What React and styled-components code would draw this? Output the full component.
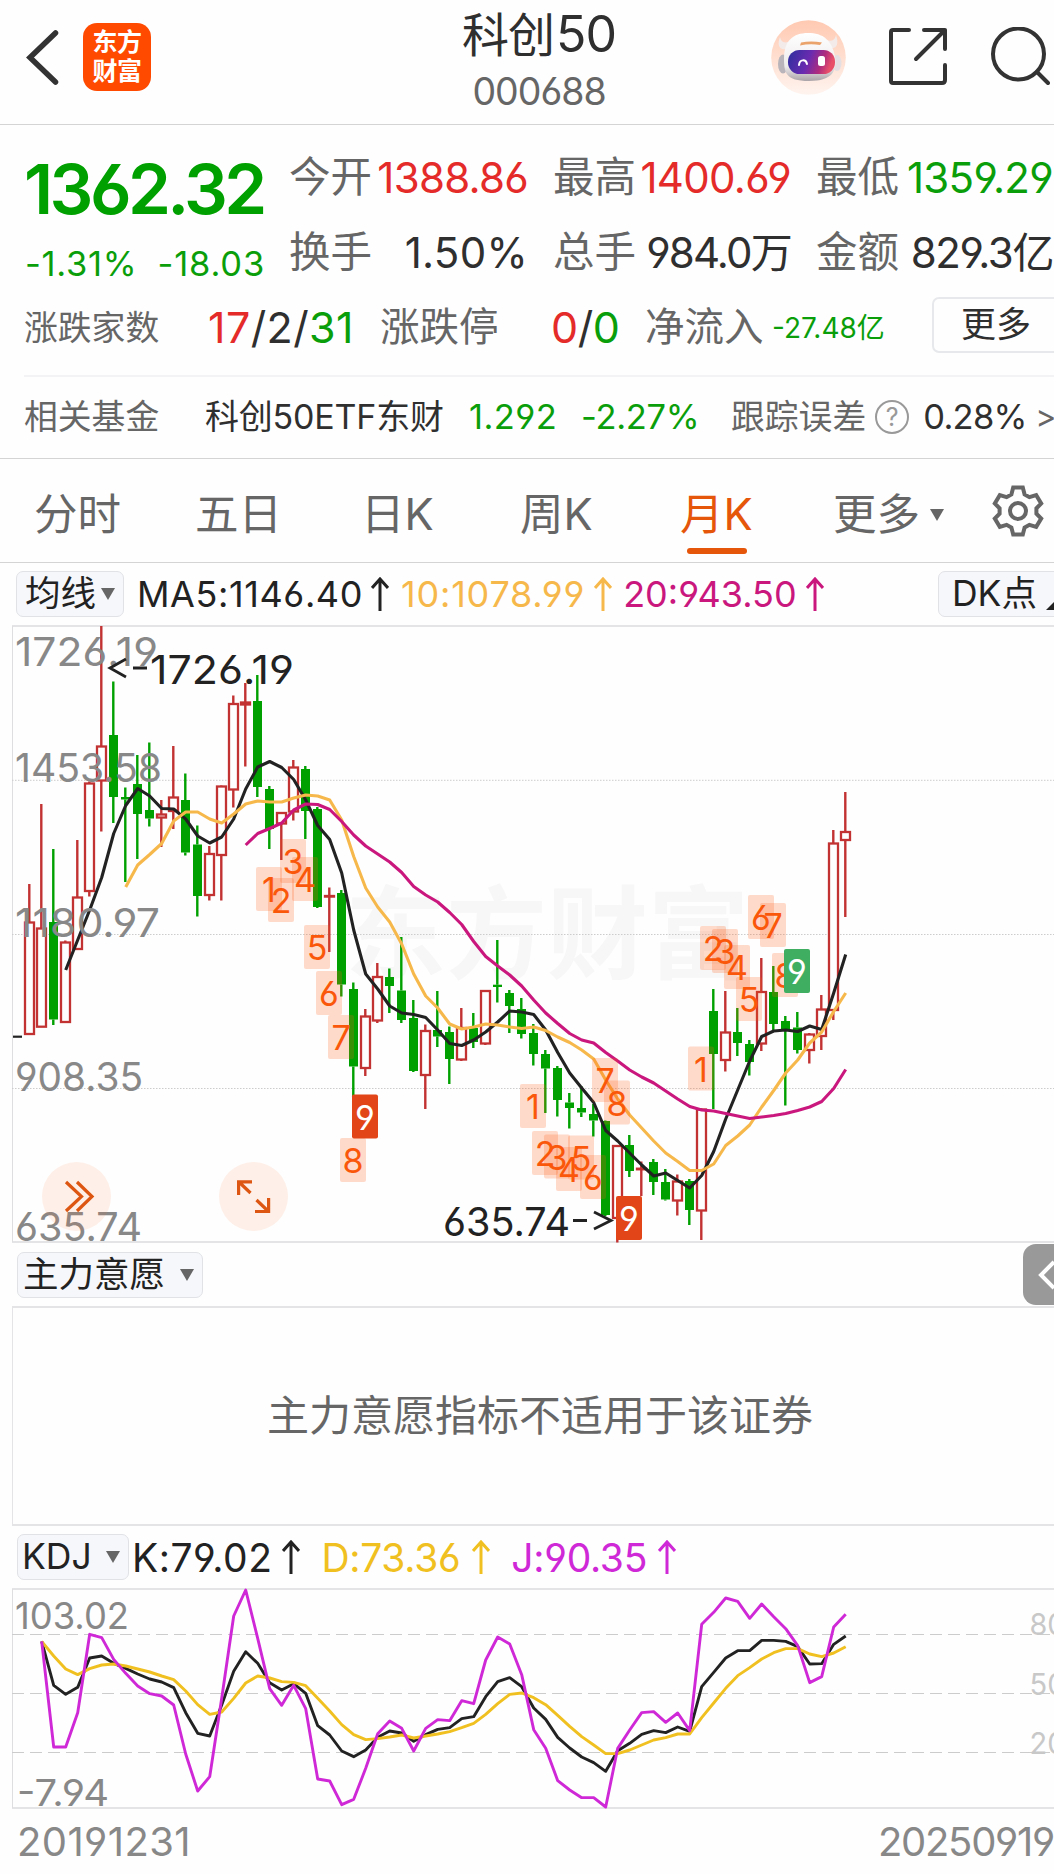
import React from 'react'
import styled, { createGlobalStyle } from 'styled-components'

const RED = '#e52a2a'
const GREEN = '#0a9e0a'
const INK = '#2f2f2f'
const GREY = '#666'
const ORANGE = '#e5560a'
const FONT = `Inter, "Noto Sans CJK SC", sans-serif`

const GlobalStyle = createGlobalStyle`
  * { box-sizing: border-box; }
  body {
    margin: 0;
    background: #fefefe;
    font-family: ${FONT};
    font-feature-settings: 'cv03', 'cv04';
    color: ${INK};
  }
  svg { display: block; flex: none; }
  svg text { font-family: ${FONT}; }
`

const Page = styled.div`
  width: 1054px;
  height: 1874px;
  overflow: hidden;
  background: #fefefe;
`

// s = font size, w = box width, ml = left margin, ls = letter spacing
const Txt = styled.span`
  display: block;
  flex: none;
  white-space: nowrap;
  line-height: 1;
  font-size: ${p => p.$s}px;
  color: ${p => p.$c || 'inherit'};
  width: ${p => (p.$w ? p.$w + 'px' : 'auto')};
  margin-left: ${p => p.$ml || 0}px;
  letter-spacing: ${p => p.$ls || 0}px;
  font-weight: ${p => p.$weight || 400};
`

const Tint = styled.span`
  color: ${p => p.$c};
`

const Header = styled.header`
  display: flex;
  align-items: center;
  height: 125px;
  padding-left: 26px;
  border-bottom: 1px solid #d4d4d4;
`

const BackIcon = styled.svg`
  width: 34px;
  height: 60px;
  margin-bottom: 10px;
`

const Logo = styled.div`
  display: flex;
  flex-direction: column;
  align-items: center;
  justify-content: center;
  width: 68px;
  height: 68px;
  margin: 0 0 10px 23px;
  border-radius: 14px;
  background: #ff4a00;
  color: #fff;
  font-size: 25px;
  font-weight: 700;
  line-height: 29px;
  letter-spacing: -0.5px;
`

const Title = styled.div`
  display: flex;
  flex-direction: column;
  align-items: center;
  width: 240px;
  height: 125px;
  margin-left: 268px;
  padding-top: 9px;
`

const TitleName = styled.div`
  height: 49px;
  font-size: 47px;
  line-height: 49px;
  letter-spacing: -1px;
  margin-bottom: 15px;
`

const TitleNumber = styled.span`
  margin-left: 2px;
  font-size: 50px;
  line-height: 1;
`

const HeadIcons = styled.div`
  display: flex;
  align-items: center;
  gap: 42px;
  margin: 0 0 10px 112px;
`

const Quote = styled.section`
  height: 334px;
  border-bottom: 1px solid #d4d4d4;
`

const QuoteTop = styled.div`
  display: flex;
  height: 164px;
`

const PriceBox = styled.div`
  width: 289px;
  padding: 30px 0 0 24px;
`

const Changes = styled.div`
  display: flex;
  justify-content: space-between;
  width: 241px;
  margin-top: 23px;
  padding-left: 1px;
`

const Stats = styled.div`
  display: grid;
  grid-template-columns: 239px 238px 237px;
  column-gap: 25px;
  grid-template-rows: 75px 75px;
  padding-top: 15px;
`

const Stat = styled.div`
  display: flex;
  align-items: center;
  justify-content: space-between;
`

const Row = styled.div`
  display: flex;
  align-items: center;
  height: ${p => p.$h}px;
  padding-left: ${p => p.$pl || 0}px;
  padding-bottom: ${p => p.$pb || 0}px;
`

const Rule = styled.div`
  height: 2px;
  margin-left: 24px;
  background: #f3f3f5;
`

const MoreButton = styled.div`
  flex: none;
  width: 140px;
  height: 56px;
  margin: 0 0 5px 48px;
  padding-left: 27px;
  border: 2px solid #e6e8eb;
  border-radius: 7px;
  font-size: 35px;
  line-height: 51px;
`

const Help = styled.span`
  display: flex;
  flex: none;
  align-items: center;
  justify-content: center;
  width: 34px;
  height: 34px;
  margin-left: 9px;
  border: 2.5px solid #999;
  border-radius: 50%;
  color: #999;
  font-size: 25px;
  line-height: 1;
`

const Tabs = styled.nav`
  display: flex;
  align-items: center;
  height: 104px;
  border-bottom: 1px solid #d4d4d4;
`

const Tab = styled.div`
  display: flex;
  align-items: center;
  flex: none;
  position: relative;
  height: 100%;
  width: ${p => p.$w}px;
  padding: 8px 0 0 ${p => p.$pl || 0}px;
  font-size: 43.5px;
  line-height: 1;
  white-space: nowrap;
  color: ${p => (p.$active ? ORANGE : GREY)};

  &::after {
    content: '';
    display: ${p => (p.$active ? 'block' : 'none')};
    position: absolute;
    left: 7px;
    bottom: 8px;
    width: 60px;
    height: 6px;
    border-radius: 3px;
    background: ${ORANGE};
  }
`

const Chip = styled.div`
  display: flex;
  align-items: center;
  justify-content: space-between;
  flex: none;
  width: ${p => p.$w}px;
  height: 46px;
  padding: 0 8px 0 ${p => p.$pl || 8}px;
  border: 1.5px solid #e0e2e6;
  border-radius: 7px;
  background: #f6f7fa;
  font-size: 35.5px;
  line-height: 1;
  white-space: nowrap;
  color: #222;
`

// runs past the right edge of the screen
const EdgeChip = styled(Chip)`
  justify-content: flex-start;
  margin-left: auto;
  margin-right: -24px;
`

const Caret = styled.i`
  flex: none;
  border: 7px solid transparent;
  border-top: 12px solid ${GREY};
  border-bottom: 0;
  margin-left: ${p => p.$ml || 0}px;
`

const CornerMark = styled.i`
  flex: none;
  align-self: flex-end;
  margin: 0 0 6px 9px;
  border-left: 14px solid transparent;
  border-bottom: 14px solid #222;
`

const Arrow = styled.svg`
  width: 18px;
  height: 34px;
  margin-left: ${p => p.$ml}px;
`

const Drawer = styled.div`
  display: flex;
  align-items: center;
  align-self: flex-start;
  width: 31px;
  height: 61px;
  margin-left: auto;
  padding-left: 14px;
  border-radius: 13px 0 0 13px;
  background: #999;
  overflow: hidden;
`

const EmptyPanel = styled.div`
  display: flex;
  align-items: center;
  height: 220px;
  margin-left: 12px;
  padding-left: 254px;
  border: 2px solid #e4e4e6;
  border-left-width: 1px;
  border-right: 0;
`

const Dates = styled.div`
  display: flex;
  align-items: center;
  justify-content: space-between;
  height: 64px;
  padding-left: 17px;
`

/* ---------- chart data ---------- */

// [up, high, bodyTop, bodyBottom, low]
const candles = [
  [1, 884, 922.5, 1034, 1034], [1, 804, 928.5, 1026.7, 1027], [0, 849, 922, 1019.5, 1025],
  [1, 940.5, 942.5, 1022, 1022], [1, 840, 897.5, 949, 949], [1, 781.5, 783.5, 891, 896.5],
  [1, 626, 746.5, 780.5, 831.5], [0, 681.5, 735, 797, 823], [0, 787.5, 797, 799.5, 882],
  [0, 755, 784, 814, 859], [0, 742.5, 810, 818.5, 826.5], [1, 800, 814.5, 817.5, 847],
  [1, 746, 797.5, 811, 829], [0, 773.5, 800, 852.5, 855.5], [0, 825.5, 844.5, 896, 916.5],
  [1, 846, 854, 895, 900.5], [1, 785.5, 786.5, 855, 900.5], [1, 695.5, 704, 789.5, 807.5],
  [1, 683, 702.5, 704.5, 766.5], [0, 675, 701, 787, 797], [0, 786, 789, 829, 849],
  [1, 812, 813, 823.5, 860], [1, 760, 767.5, 811.5, 820.5], [0, 766, 769, 811, 839],
  [0, 807, 809, 907, 908], [1, 887.5, 896, 896.6, 952], [0, 890, 893, 984.5, 996.5],
  [0, 982.5, 989, 1066.5, 1120], [1, 1009, 1016.5, 1068, 1076], [1, 963, 977, 1020.5, 1023],
  [0, 968.5, 977, 986, 1013], [0, 937, 990.5, 1020, 1023], [0, 1000, 1018, 1071, 1072],
  [1, 1024.5, 1031, 1075, 1109], [0, 991, 1030, 1036.5, 1047], [0, 1026.5, 1032, 1059, 1084],
  [1, 1008, 1028, 1059.5, 1061], [0, 1013, 1028, 1042, 1048], [1, 990, 991, 1043.5, 1045],
  [0, 940, 984.7, 987, 1002.5], [0, 990, 993, 1006, 1033], [0, 998, 1009, 1034, 1038.5],
  [0, 1024, 1033, 1054, 1065.5], [0, 1050, 1054, 1068.5, 1113], [0, 1066, 1068, 1100, 1116.5],
  [0, 1093, 1102.5, 1108, 1128.5], [0, 1086, 1108, 1112.5, 1117], [0, 1104, 1114, 1120.5, 1136.5],
  [0, 1120.5, 1121, 1215, 1216], [1, 1145, 1146, 1218, 1242.5], [0, 1135, 1145, 1171, 1177],
  [1, 1161.5, 1168.7, 1169.3, 1196], [0, 1159, 1162, 1182, 1195], [0, 1169, 1182, 1199.5, 1200.5],
  [1, 1174.5, 1181.5, 1200.5, 1215.5], [0, 1179, 1181, 1210, 1225], [1, 1108.5, 1109.5, 1210.5, 1240],
  [0, 989, 1011, 1054, 1109], [1, 991, 1032.5, 1060, 1071.5], [0, 1008, 1032, 1043, 1056],
  [0, 1040, 1044, 1062, 1075.5], [1, 958, 992, 1043.5, 1051], [0, 966, 992, 1024, 1030],
  [0, 1016, 1021, 1029, 1105.5], [0, 1012, 1027.5, 1050, 1053.5], [1, 1033, 1034.5, 1050, 1063.5],
  [1, 995, 1009.5, 1036, 1050], [1, 830, 843.5, 1010, 1020], [1, 792, 832, 840, 917],
]

const ma5 = [970, 940, 910, 877.5, 833.5, 805.5, 788.5, 796, 808.5, 809, 819, 836, 843, 837, 819, 789, 767, 761.5,
  767.5, 779.5, 800, 825.5, 839.5, 873, 930, 974, 989, 1006, 1013, 1014.5, 1017.5, 1030, 1043.5, 1045.5, 1040,
  1032, 1022, 1011, 1012, 1014.5, 1030, 1052.5, 1073, 1088, 1102.5, 1130.5, 1141, 1153, 1165, 1176, 1173,
  1180.5, 1188, 1175.5, 1151.5, 1119, 1090, 1061, 1036.5, 1031, 1030, 1031.5, 1026, 1029.5, 993, 954.5]

const ma10 = [887, 865, 854.5, 843.5, 821, 812, 812, 819, 823, 814, 804, 801, 802, 802, 798, 795, 796, 800, 820,
  856.5, 888, 907, 922, 944, 974, 996, 1008, 1024, 1029, 1027, 1024, 1025, 1027, 1028.5, 1027, 1030.5, 1037,
  1042.5, 1050, 1059, 1080, 1099, 1115, 1128, 1141, 1153, 1161.5, 1170.5, 1170.5, 1164, 1145.5, 1136, 1125,
  1107, 1090.5, 1073, 1060, 1043, 1032, 1011.5, 993]

const ma20 = [845, 833.5, 828.5, 823, 810, 804, 804.5, 809.5, 821.5, 835, 846, 854, 862, 872.5, 886.5, 895, 902,
  912.5, 924.5, 941.5, 956.5, 966, 975, 986, 1000, 1013, 1023.5, 1033.5, 1040, 1043, 1052.5, 1061, 1070, 1077,
  1083, 1091, 1099, 1106.5, 1110, 1111, 1113.5, 1116, 1118.5, 1117, 1115.5, 1113.5, 1110.5, 1107, 1101.5,
  1088.5, 1069.5]

// [count, candle index, top, solid fill]
const marks = [
  [1, 20, 867], [2, 21, 878], [3, 22, 839], [4, 23, 857], [5, 24, 925], [6, 25, 971], [7, 26, 1015],
  [8, 27, 1138], [9, 28, 1094.5, '#e24517'],
  [1, 42, 1084], [2, 43, 1131], [3, 44, 1134.5], [4, 45, 1147], [5, 46, 1135.5], [6, 47, 1155],
  [7, 48, 1058], [8, 49, 1080.5], [9, 50, 1196, '#e24517'],
  [1, 56, 1046.5], [2, 57, 926], [3, 58, 929], [4, 59, 945], [5, 60, 977], [6, 61, 895], [7, 62, 903],
  [8, 63, 953], [9, 64, 949, '#3fae60'],
]

const kLine = [334, 466, 493, 472, 384, 378, 400, 415, 432, 447, 456, 473, 548, 610, 618, 525, 424, 365, 400, 458,
  480, 461, 490, 587, 615, 663, 680, 660, 622, 603, 609, 634, 614, 598, 593, 566, 560, 500, 455, 443, 470, 534,
  568, 622, 654, 681, 698, 724, 662, 640, 613, 602, 608, 591, 604, 470, 427, 384, 362, 362, 331, 331, 334, 350,
  402, 401, 343, 318]

const dLine = [334, 378, 417, 434, 416, 405, 402, 408, 417, 426, 438, 449, 483, 524, 553, 546, 505, 459, 438, 444,
  455, 457, 467, 505, 543, 584, 614, 629, 626, 621, 615, 624, 618, 612, 605, 593, 580, 553, 521, 493, 489, 503,
  524, 556, 589, 620, 645, 671, 671, 660, 645, 630, 623, 612, 612, 563, 519, 475, 437, 413, 387, 368, 356, 356,
  372, 380, 369, 350]

const jLine = [334, 651, 651, 548, 313, 323, 388, 430, 468, 491, 498, 525, 672, 783, 740, 505, 258, 180, 325, 476,
  526, 466, 536, 747, 753, 824, 808, 715, 611, 573, 595, 663, 595, 569, 572, 512, 521, 390, 321, 342, 434, 599,
  655, 752, 780, 803, 803, 831, 655, 600, 548, 545, 577, 549, 602, 283, 247, 204, 214, 265, 222, 260, 296, 347,
  458, 440, 291, 253]

const cx = i => 29.5 + i * 12
const points = (list, start, fy = v => v) => list.map((v, n) => `${cx(n + start) + 0.2},${fy(v)}`).join(' ')
const kdjY = v => 1530 + v / 3

/* ---------- pieces ---------- */

const UpArrow = ({ color, ml }) => (
  <Arrow $ml={ml} viewBox="0 0 18 34" fill="none" stroke={color} strokeWidth="3">
    <path d="M9 2V34M1 11L9 2L17 11" />
  </Arrow>
)

const Robot = () => (
  <svg width="75" height="75" viewBox="0 0 75 75">
    <defs>
      <linearGradient id="halo" x1="0" y1="0" x2="0" y2="1">
        <stop offset="0" stopColor="#ffc9b1" />
        <stop offset="1" stopColor="#fff4ef" />
      </linearGradient>
      <linearGradient id="visor" x1="0" y1="0" x2="1" y2="0.2">
        <stop offset="0" stopColor="#2d2f9e" />
        <stop offset="0.5" stopColor="#6a2bb0" />
        <stop offset="0.8" stopColor="#b02c7c" />
        <stop offset="1" stopColor="#e8506a" />
      </linearGradient>
      <linearGradient id="shell" x1="0" y1="0" x2="0" y2="1">
        <stop offset="0" stopColor="#ffffff" />
        <stop offset="0.7" stopColor="#eeebeb" />
        <stop offset="1" stopColor="#aaa3a8" />
      </linearGradient>
    </defs>
    <circle cx="37.5" cy="37.5" r="37.3" fill="url(#halo)" />
    <path d="M9 17C6 25 8 30 15 29L20 21C13 24 10 22 9 17ZM65 15C68 24 66 29 59 28L54 20C61 22 64 20 65 15Z" fill="#f3ebe9" />
    <ellipse cx="12" cy="44" rx="5" ry="9.5" fill="#b9b4ba" />
    <ellipse cx="66" cy="43" rx="4.5" ry="8" fill="#e4dfe2" />
    <path d="M13 38C13 21 22 13 37 13S61 20 64 37C66 50 62 61 38 61S13 52 13 38Z" fill="url(#shell)" />
    <path d="M30 22.5Q40 20.5 51 22.5L49 25Q39 23.5 29 25.5Z" fill="#eba36c" />
    <rect x="17" y="30" width="47" height="24" rx="11.5" fill="url(#visor)" />
    <path d="M28 45C28.5 39 35 39 36 44" fill="none" stroke="#fff" strokeWidth="2" strokeLinecap="round" />
    <rect x="47" y="36" width="7" height="10" rx="2.5" fill="#fff" />
  </svg>
)

const Gear = () => (
  <svg width="52" height="52" viewBox="-26 -26 52 52" fill="none" stroke={GREY} strokeWidth="4" strokeLinejoin="miter">
    <path d="M-4.8 -23.5H4.8L6.6 -16.6L11.4 -13.8L18.2 -15.9L23.2 -7.6L18.4 -2.7V2.7L23.2 7.6L18.2 15.9L11.4 13.8L6.6 16.6L4.8 23.5H-4.8L-6.6 16.6L-11.4 13.8L-18.2 15.9L-23.2 7.6L-18.4 2.7V-2.7L-23.2 -7.6L-18.2 -15.9L-11.4 -13.8L-6.6 -16.6Z" />
    <circle r="8" />
  </svg>
)

const Candle = ({ data, i }) => {
  const [up, high, top, bottom, low] = data
  const x = cx(i)
  const color = up ? '#c23232' : '#00a000'
  return (
    <g>
      <path d={`M${x - 0.2} ${high}V${top}M${x - 0.2} ${bottom}V${low}`} stroke={color} strokeWidth="2.4" />
      {up
        ? <rect x={x - 4.5} y={top} width="9" height={bottom - top} fill="#fefefe" stroke={color} strokeWidth="2.3" />
        : <rect x={x - 4.5} y={top} width="9" height={bottom - top} fill={color} />}
    </g>
  )
}

const AxisText = ({ x, y, len, size = 40, fill = '#888', children }) => (
  <text x={x} y={y} fontSize={size} fill={fill} textLength={len} lengthAdjust="spacingAndGlyphs">{children}</text>
)

const KChart = () => (
  <svg width="1054" height="619" viewBox="0 625 1054 619">
    <text x="345" y="971" fontSize="101" fontWeight="700" fill="#f7f7f8">东方财富</text>
    <path d="M12 626H1054M12 1242H1054" stroke="#e4e4e6" strokeWidth="2" />
    <path d="M12.5 626V1242" stroke="#dedee0" />
    <path d="M12 780.3H1054M12 934.5H1054M12 1088.5H1054" stroke="#ccc" strokeDasharray="1.5 1.5" />
    <path d="M13 1036.7H22" stroke="#222" strokeWidth="2.2" />
    {candles.map((c, i) => <Candle key={i} data={c} i={i} />)}
    <g fill="none" strokeWidth="3.1" strokeLinejoin="round">
      <polyline points={points(ma5, 3)} stroke="#222" />
      <polyline points={points(ma10, 8)} stroke="#f7b84b" />
      <polyline points={points(ma20, 18)} stroke="#c9177e" />
    </g>
    {marks.map(([n, i, top, solid], k) => (
      <g key={k}>
        <rect x={16 + i * 12} y={top} width="26" height="44" rx="2" fill={solid || 'rgba(255,90,20,.22)'} />
        <text x={29 + i * 12} y={top + 35} fontSize="34" textAnchor="middle" fill={solid ? '#fff' : '#fa570a'}>{n}</text>
      </g>
    ))}
    <AxisText x={15} y={666} len={143}>1726.19</AxisText>
    <AxisText x={15} y={781.5} len={147}>1453.58</AxisText>
    <AxisText x={15} y={937} len={145}>1180.97</AxisText>
    <AxisText x={15} y={1091} len={128}>908.35</AxisText>
    <AxisText x={15} y={1241} len={127}>635.74</AxisText>
    <path d="M126 659L110 668L126 677M133 668H147" fill="none" stroke="#222" strokeWidth="2.8" />
    <AxisText x={150} y={684} len={144} fill="#222">1726.19</AxisText>
    <AxisText x={443} y={1236} len={127} fill="#222">635.74</AxisText>
    <path d="M573 1220.5H587M594 1212L611 1220.5L594 1229" fill="none" stroke="#222" strokeWidth="2.8" />
    <circle cx="76.5" cy="1196.5" r="34.5" fill="rgba(255,110,40,.1)" />
    <circle cx="253.5" cy="1196.5" r="34.5" fill="rgba(255,110,40,.1)" />
    <g fill="none" stroke="#dd5712" strokeWidth="3.2">
      <path d="M66 1182L81.5 1196.5L66 1211M77 1182L92 1196.5L77 1211" />
      <path d="M252 1181.8H238.6V1195M239 1182L250.5 1193M255 1211.5H268.6V1198M268 1211L256.5 1200" />
    </g>
  </svg>
)

const KdjChart = () => (
  <svg width="1054" height="222" viewBox="0 1588 1054 222">
    <path d="M12 1589H1054M12 1808H1054" stroke="#e4e4e6" strokeWidth="2" />
    <path d="M12.5 1589V1808" stroke="#dedee0" />
    <path d="M12 1634.5H1054M12 1693.5H1054M12 1752.5H1054" stroke="#ccc" strokeDasharray="12 6" />
    <AxisText x={15} y={1629} len={114} size={37}>103.02</AxisText>
    <AxisText x={17} y={1805.5} len={92} size={37}>-7.94</AxisText>
    <AxisText x={1029.5} y={1635} len={36} size={30} fill="#c8c8c8">80</AxisText>
    <AxisText x={1029.5} y={1695} len={36} size={30} fill="#c8c8c8">50</AxisText>
    <AxisText x={1029.5} y={1754} len={36} size={30} fill="#c8c8c8">20</AxisText>
    <g fill="none" strokeWidth="2.9" strokeLinejoin="round">
      <polyline points={points(kLine, 1, kdjY)} stroke="#222" />
      <polyline points={points(dLine, 1, kdjY)} stroke="#f0c020" />
      <polyline points={points(jLine, 1, kdjY)} stroke="#cf28d6" />
    </g>
  </svg>
)

const StatItem = ({ label, value, color = INK, ls = -0.7 }) => (
  <Stat>
    <Txt $s={41.5} $c={GREY}>{label}</Txt>
    <Txt $s={42} $c={color} $ls={ls}>{value}</Txt>
  </Stat>
)

export default function App() {
  return (
    <Page>
      <GlobalStyle />
      <Header>
        <BackIcon viewBox="0 0 34 60" fill="none" stroke="#333" strokeWidth="5.5" strokeLinecap="round">
          <path d="M29.5 6L4 30.5L29.5 55" />
        </BackIcon>
        <Logo>
          <span>东方</span>
          <span>财富</span>
        </Logo>
        <Title>
          <TitleName>科创<TitleNumber>50</TitleNumber></TitleName>
          <Txt $s={37.5} $c={GREY} $ls={-1}>000688</Txt>
        </Title>
        <HeadIcons>
          <Robot />
          <svg width="60" height="60" viewBox="0 0 60 60" fill="none" stroke="#333" strokeWidth="4" strokeLinecap="round" strokeLinejoin="round">
            <path d="M21 3H5Q3 3 3 5V54Q3 56 5 56H54Q57 56 57 53V38M36 3H57V22M57 3L28 32" />
          </svg>
          <svg width="60" height="60" viewBox="0 0 60 60" fill="none" stroke="#333" strokeWidth="4" strokeLinecap="round">
            <circle cx="28.5" cy="27" r="25.5" />
            <path d="M47 45L58 56" />
          </svg>
        </HeadIcons>
      </Header>

      <Quote>
        <QuoteTop>
          <PriceBox>
            <Txt $s={69} $c="#00a000" $weight={600} $ls={-3.6}>1362.32</Txt>
            <Changes>
              <Txt $s={34.5} $c={GREEN} $ls={0.7}>-1.31%</Txt>
              <Txt $s={34.5} $c={GREEN} $ls={0.8}>-18.03</Txt>
            </Changes>
          </PriceBox>
          <Stats>
            <StatItem label="今开" value="1388.86" color={RED} />
            <StatItem label="最高" value="1400.69" color={RED} />
            <StatItem label="最低" value="1359.29" color={GREEN} />
            <StatItem label="换手" value="1.50%" ls={0.3} />
            <StatItem label="总手" value="984.0万" ls={-1.8} />
            <StatItem label="金额" value="829.3亿" ls={-1.4} />
          </Stats>
        </QuoteTop>
        <Row $h={86} $pl={24} $pb={9}>
          <Txt $s={33.8} $c={GREY} $w={184}>涨跌家数</Txt>
          <Txt $s={43} $w={172} $ls={0.4}>
            <Tint $c={RED}>17</Tint>/2/<Tint $c={GREEN}>31</Tint>
          </Txt>
          <Txt $s={39.5} $c={GREY} $w={171}>涨跌停</Txt>
          <Txt $s={43} $w={94} $ls={-0.4}>
            <Tint $c={RED}>0</Tint>/<Tint $c={GREEN}>0</Tint>
          </Txt>
          <Txt $s={39.5} $c={GREY} $w={127}>净流入</Txt>
          <Txt $s={28} $c={GREEN} $w={112} $ls={0}>-27.48亿</Txt>
          <MoreButton>更多</MoreButton>
        </Row>
        <Rule />
        <Row $h={80} $pl={24}>
          <Txt $s={33.8} $c={GREY} $w={181}>相关基金</Txt>
          <Txt $s={34} $w={264} $ls={-0.2}>科创50ETF东财</Txt>
          <Txt $s={34.5} $c={GREEN} $w={112} $ls={0.4}>1.292</Txt>
          <Txt $s={34.5} $c={GREEN} $w={150} $ls={-0.3}>-2.27%</Txt>
          <Txt $s={33.8} $c={GREY}>跟踪误差</Txt>
          <Help>?</Help>
          <Txt $s={34.5} $w={112} $ml={14} $ls={-0.7}>0.28%</Txt>
          <Txt $s={32} $c={GREY}>&gt;</Txt>
        </Row>
      </Quote>

      <Tabs>
        <Tab $w={161} $pl={34}>分时</Tab>
        <Tab $w={200} $pl={34}>五日</Tab>
        <Tab $w={159}>日K</Tab>
        <Tab $w={160}>周K</Tab>
        <Tab $w={153} $active>月K</Tab>
        <Tab $w={159}>更多<Caret $ml={10} /></Tab>
        <Gear />
      </Tabs>

      <Row $h={62} $pl={16}>
        <Chip $w={108}>均线<Caret /></Chip>
        <Txt $s={36} $c="#222" $ml={13} $ls={0.6}>MA5:1146.40</Txt>
        <UpArrow color="#222" ml={8} />
        <Txt $s={36} $c="#f7b84b" $ml={12} $ls={0.8}>10:1078.99</Txt>
        <UpArrow color="#f7b84b" ml={9} />
        <Txt $s={36} $c="#c9177e" $ml={11} $ls={0}>20:943.50</Txt>
        <UpArrow color="#c9177e" ml={9} />
        <EdgeChip $w={140} $pl={13}>DK点<CornerMark /></EdgeChip>
      </Row>

      <KChart />

      <Row $h={62} $pl={17}>
        <Chip $w={186} $pl={5}>主力意愿<Caret /></Chip>
        <Drawer>
          <svg width="20" height="32" viewBox="0 0 20 32" fill="none" stroke="#fff" strokeWidth="4">
            <path d="M17 3L4 16L17 29" />
          </svg>
        </Drawer>
      </Row>
      <EmptyPanel>
        <Txt $s={42} $c={GREY}>主力意愿指标不适用于该证券</Txt>
      </EmptyPanel>

      <Row $h={62} $pl={17}>
        <Chip $w={112} $pl={4}>KDJ<Caret /></Chip>
        <Txt $s={39} $c="#222" $ml={3} $ls={0.5}>K:79.02</Txt>
        <UpArrow color="#222" ml={10} />
        <Txt $s={39} $c="#f0c020" $ml={21} $ls={-0.3}>D:73.36</Txt>
        <UpArrow color="#f0c020" ml={12} />
        <Txt $s={39} $c="#cf28d6" $ml={21} $ls={-0.3}>J:90.35</Txt>
        <UpArrow color="#cf28d6" ml={11} />
      </Row>
      <KdjChart />
      <Dates>
        <Txt $s={40} $c="#888" $ls={0.4}>20191231</Txt>
        <Txt $s={40} $c="#888" $w={176} $ls={-1.3}>20250919</Txt>
      </Dates>
    </Page>
  )
}
